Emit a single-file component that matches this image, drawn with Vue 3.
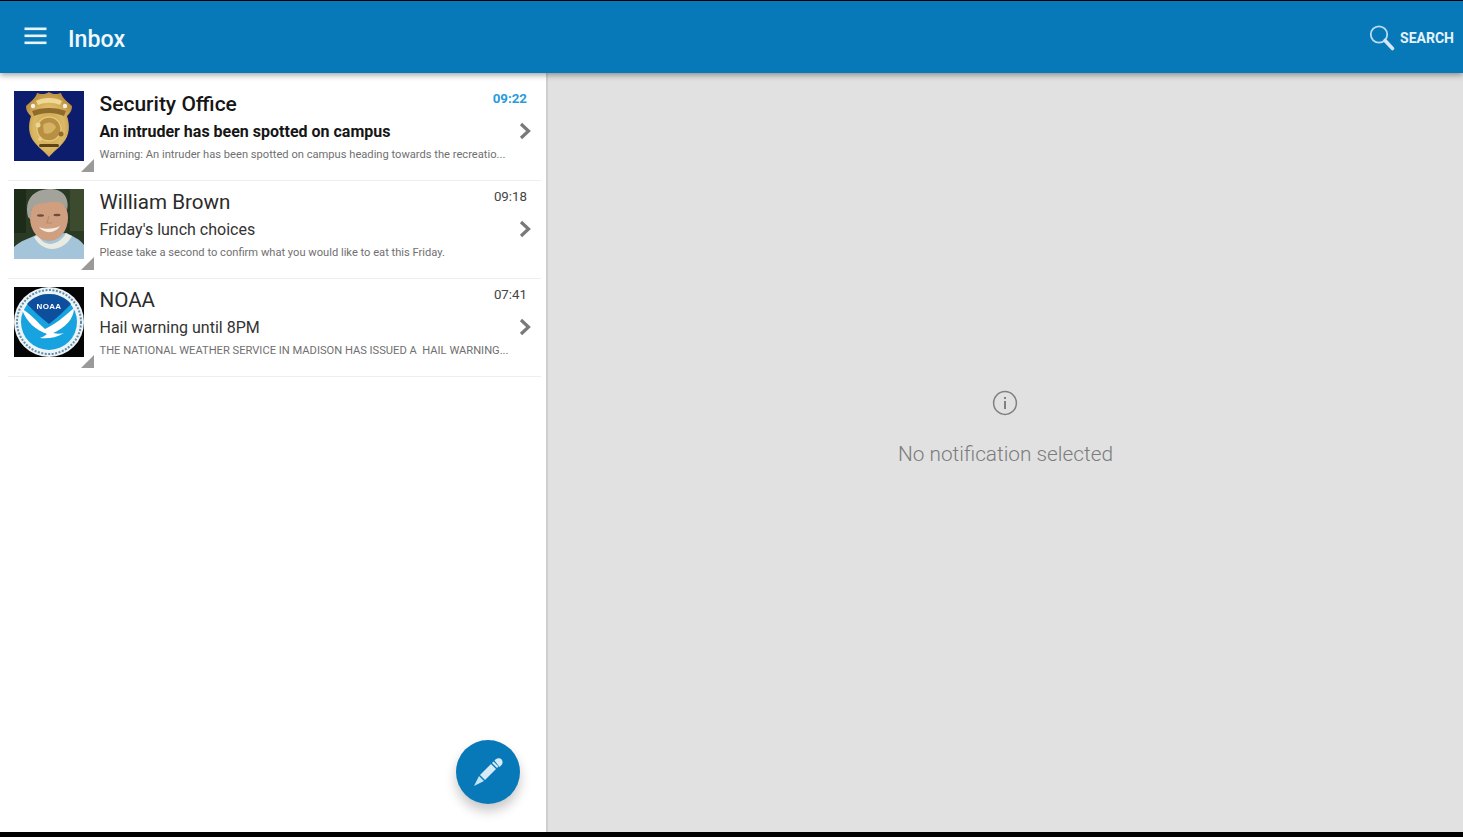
<script setup>
import { ref } from 'vue';

const notifications = ref([
  {
    id: 1,
    sender: 'Security Office',
    time: '09:22',
    subject: 'An intruder has been spotted on campus',
    preview: 'Warning: An intruder has been spotted on campus heading towards the recreatio...',
    avatar: 'badge',
    unread: true,
  },
  {
    id: 2,
    sender: 'William Brown',
    time: '09:18',
    subject: "Friday's lunch choices",
    preview: 'Please take a second to confirm what you would like to eat this Friday.',
    avatar: 'photo',
    unread: false,
  },
  {
    id: 3,
    sender: 'NOAA',
    time: '07:41',
    subject: 'Hail warning until 8PM',
    preview: 'THE NATIONAL WEATHER SERVICE IN MADISON HAS ISSUED A  HAIL WARNING...',
    avatar: 'noaa',
    unread: false,
  },
]);
</script>

<template>
  <div class="screen">
    <header class="app-bar">
      <div class="bar-left">
        <svg class="menu-icon" viewBox="0 0 24 18" width="24" height="18">
          <rect x="0.5" y="0.5" width="22" height="2.6" fill="#e8f3fa" />
          <rect x="0.5" y="7.5" width="22" height="2.6" fill="#e8f3fa" />
          <rect x="0.5" y="14.5" width="22" height="2.6" fill="#e8f3fa" />
        </svg>
        <span class="bar-title">Inbox</span>
      </div>
      <div class="bar-search">
        <svg viewBox="0 0 28 28" width="28" height="28">
          <circle cx="11" cy="10.5" r="8.2" fill="none" stroke="#bcdcef" stroke-width="1.8" />
          <path d="M17 16.5 L24.5 24.5" stroke="#d3e8f4" stroke-width="3.6" stroke-linecap="round" />
        </svg>
        <span>SEARCH</span>
      </div>
    </header>

    <main class="content">
      <section class="list-pane">
        <article v-for="item in notifications" :key="item.id" class="row">
          <div class="avatar-wrap">
            <svg v-if="item.avatar === 'badge'" class="avatar" viewBox="0 0 70 70">
              <defs>
                <radialGradient id="gold" cx="0.5" cy="0.55" r="0.6">
                  <stop offset="0" stop-color="#c99d4e" />
                  <stop offset="0.55" stop-color="#dcb964" />
                  <stop offset="1" stop-color="#b58a3c" />
                </radialGradient>
              </defs>
              <rect width="70" height="70" fill="#0c1d6d" />
              <path d="M35 1 C39 4 44 3 47 2 C48 7 54 11 58 15 C58 20 56 22 53 25 C56 34 56 44 49 52 C44 58 40 60 35 66 C30 60 26 58 21 52 C14 44 14 34 17 25 C14 22 12 20 12 15 C16 11 22 7 23 2 C26 3 31 4 35 1 Z" fill="url(#gold)" />
              <path d="M18 20 C27 16 43 16 52 20 L50 25 C40 21 30 21 20 25 Z" fill="#8f6c2c" />
              <path d="M22 10 C28 6 42 6 48 10 L46 14 C38 11 32 11 24 14 Z" fill="#eed894" />
              <circle cx="35" cy="38" r="12" fill="#b98f42" stroke="#e3c87f" stroke-width="1.4" />
              <path d="M29 34 C33 30 40 31 42 36 C40 41 35 44 30 42 Z" fill="#d6b264" />
              <circle cx="24" cy="34" r="2.5" fill="#ecd694" />
              <circle cx="47" cy="43" r="2.5" fill="#8f6c2c" />
              <circle cx="26" cy="48" r="2" fill="#e8cf86" />
              <rect x="25" y="53" width="20" height="3" rx="1.5" fill="#5e4417" />
              <circle cx="19" cy="15" r="2.2" fill="#f6f1e2" />
              <circle cx="51" cy="15" r="2.2" fill="#f6f1e2" />
            </svg>

            <svg v-else-if="item.avatar === 'photo'" class="avatar" viewBox="0 0 70 70">
              <rect width="70" height="70" fill="#2a3a24" />
              <rect x="56" width="14" height="42" fill="#3c4a2d" />
              <rect width="12" height="44" fill="#1d2c18" />
              <path d="M0 70 L0 58 C6 52 14 50 22 46 L52 44 C58 47 66 50 70 56 L70 70 Z" fill="#a4c5d9" />
              <path d="M25 44 C28 54 44 54 50 42 L46 36 L28 36 Z" fill="#c4916f" />
              <path d="M24 46 C30 60 46 56 52 44 L58 47 C50 62 30 66 20 48 Z" fill="#e9ebe3" />
              <ellipse cx="35" cy="29" rx="19" ry="23" fill="#cf9f80" />
              <path d="M25 38 C30 45 41 45 46 37 C41 40 30 41 25 38 Z" fill="#f5ece2" />
              <ellipse cx="26.5" cy="26.5" rx="3.5" ry="1.2" fill="#6d4c3a" />
              <ellipse cx="43" cy="26" rx="3.5" ry="1.2" fill="#6d4c3a" />
              <path d="M35 27 L33 34 L38 34" fill="none" stroke="#b98a6d" stroke-width="1.2" />
              <path d="M14 28 C10 12 18 1 34 0 C48 -1 56 8 53 21 C50 14 46 12 38 13 C30 14 22 14 19 18 C17 21 17 25 16 30 Z" fill="#a3a29b" />
            </svg>

            <svg v-else class="avatar" viewBox="0 0 70 70">
              <rect width="70" height="70" fill="#050505" />
              <circle cx="35" cy="35" r="35" fill="#eef3f6" />
              <circle cx="35" cy="35" r="32" fill="none" stroke="#5c8fae" stroke-width="2" stroke-dasharray="2 1.5" />
              <circle cx="35" cy="35" r="28" fill="#16a3e0" />
              <path d="M13 17 C19 10 27 7 35 7 C43 7 51 10 57 17 C50 24 43 31 35 37 C27 31 20 24 13 17 Z" fill="#0d4f9c" />
              <path d="M8 22 C16 26 24 36 31 42 C40 38 50 30 60 21 C60 32 51 41 39 46 C44 47 47 47 50 46 C42 51 33 52 26 51 C28 50 31 49 33 47 C22 43 12 35 8 22 Z" fill="#ffffff" />
              <text x="35" y="22" class="noaa-mark">NOAA</text>
            </svg>
            <span class="corner"></span>
          </div>

          <div class="row-body" :class="{ unread: item.unread }">
            <div class="row-head">
              <span class="sender">{{ item.sender }}</span>
              <span class="time">{{ item.time }}</span>
            </div>
            <div class="row-subject">
              <span class="subject">{{ item.subject }}</span>
              <svg class="chevron" viewBox="0 0 14 18" width="14" height="18">
                <path d="M3 2 L10.5 9 L3 16" fill="none" stroke="#77797b" stroke-width="3.2" />
              </svg>
            </div>
            <div class="preview">{{ item.preview }}</div>
          </div>
        </article>

        <button class="fab" type="button">
          <svg viewBox="0 0 32 32" width="32" height="32">
            <path d="M2 30 L7 20 L12 25 Z" fill="#c6e3f3" />
            <path d="M8 19 L19 8 L24 13 L13 24 Z" fill="#d5ebf8" />
            <path d="M20 7 L21.5 5.5 L26.5 10.5 L25 12 Z" fill="#d5ebf8" />
            <path d="M22.5 4.5 L24 3 C26 1.5 29 2 30 4 C31 6 30.5 8 29.5 9 L27.5 11 Z" fill="#d5ebf8" />
          </svg>
        </button>
      </section>

      <section class="detail-pane">
        <svg class="info-icon" viewBox="0 0 26 26" width="26" height="26">
          <circle cx="13" cy="13" r="11.4" fill="none" stroke="#808080" stroke-width="1.5" />
          <rect x="12" y="11" width="2" height="8" fill="#808080" />
          <rect x="12" y="7" width="2" height="2" fill="#808080" />
        </svg>
        <p class="empty-text">No notification selected</p>
      </section>
    </main>
  </div>
</template>

<style scoped>
.screen {
  width: 1463px;
  height: 837px;
  display: flex;
  flex-direction: column;
  background: #000;
  font-family: Roboto, "Liberation Sans", sans-serif;
  overflow: hidden;
}

.app-bar {
  height: 72px;
  margin-top: 1px;
  flex-shrink: 0;
  background: #0779b8;
  box-shadow: 0 2px 6px rgba(0, 0, 0, 0.38);
  position: relative;
  z-index: 2;
  display: flex;
  align-items: center;
  justify-content: space-between;
  padding: 0 9px 0 24px;
}

.bar-left {
  display: flex;
  align-items: center;
  gap: 20px;
}

.bar-title {
  color: #f1f7fb;
  font-size: 23.2px;
  font-weight: 500;
  padding-top: 4px;
}

.menu-icon {
  margin-top: -2px;
}

.bar-search {
  display: flex;
  align-items: center;
  gap: 4px;
  padding-top: 1px;
  color: #e6f2f9;
  font-size: 14px;
  font-weight: 700;
}

.content {
  height: 759px;
  flex-shrink: 0;
  display: flex;
}

.list-pane {
  width: 546px;
  flex-shrink: 0;
  padding: 10px 5px 0 8px;
  box-sizing: border-box;
  background: #fff;
  position: relative;
}

.row {
  height: 98px;
  box-sizing: border-box;
  border-bottom: 1px solid #eeeeee;
  display: flex;
  padding: 8px 0 0 6px;
}

.avatar-wrap {
  width: 80px;
  height: 80px;
  flex-shrink: 0;
  position: relative;
}

.avatar {
  display: block;
  width: 70px;
  height: 70px;
  filter: blur(0.5px);
}

.noaa-mark {
  fill: #fff;
  font-family: "Liberation Sans", sans-serif;
  font-size: 8px;
  font-weight: 700;
  letter-spacing: 0.3px;
  text-anchor: middle;
}

.corner {
  position: absolute;
  right: 0;
  top: 68px;
  width: 13px;
  height: 13px;
  background: #9a9a9a;
  clip-path: polygon(100% 0, 100% 100%, 0 100%);
}

.row-body {
  flex: 1;
  min-width: 0;
  padding: 0 9px 0 5.5px;
  color: #333;
}

.row-head {
  height: 26px;
  display: flex;
  justify-content: space-between;
  align-items: flex-start;
}

.sender {
  font-size: 20.6px;
  line-height: 26px;
  color: #2b2b2b;
}

.time {
  font-size: 13.3px;
  line-height: 14px;
  margin: 1px 5px 0 0;
  color: #444;
}

.row-subject {
  height: 26px;
  margin-top: 1px;
  display: flex;
  justify-content: space-between;
  align-items: center;
}

.subject {
  font-size: 16px;
  color: #333;
}

.chevron {
  margin-right: 0;
}

.preview {
  margin-top: 4px;
  font-size: 11.15px;
  line-height: 14px;
  color: #707070;
  white-space: pre;
}

.unread .sender {
  font-size: 21px;
  font-weight: 500;
  color: #161616;
}

.unread .subject {
  font-weight: 700;
  color: #161616;
}

.unread .time {
  font-weight: 700;
  color: #2a9bdc;
}

.fab {
  position: absolute;
  left: 456px;
  top: 667px;
  width: 64px;
  height: 64px;
  padding: 0;
  border: none;
  border-radius: 50%;
  background: #0779b8;
  box-shadow: 0 7px 12px rgba(0, 0, 0, 0.22);
  display: flex;
  align-items: center;
  justify-content: center;
}

.detail-pane {
  flex: 1;
  background: #e1e1e1;
  border-left: 2px solid #cfcfcf;
  display: flex;
  flex-direction: column;
  align-items: center;
  padding-top: 317px;
  box-sizing: border-box;
}

.info-icon {
  margin-left: -2px;
}

.empty-text {
  margin: 25px 0 0;
  font-size: 20.8px;
  font-weight: 300;
  line-height: 26px;
  color: #7c7c7c;
}
</style>

<style>
html,
body {
  margin: 0;
  background: #000;
}
</style>
